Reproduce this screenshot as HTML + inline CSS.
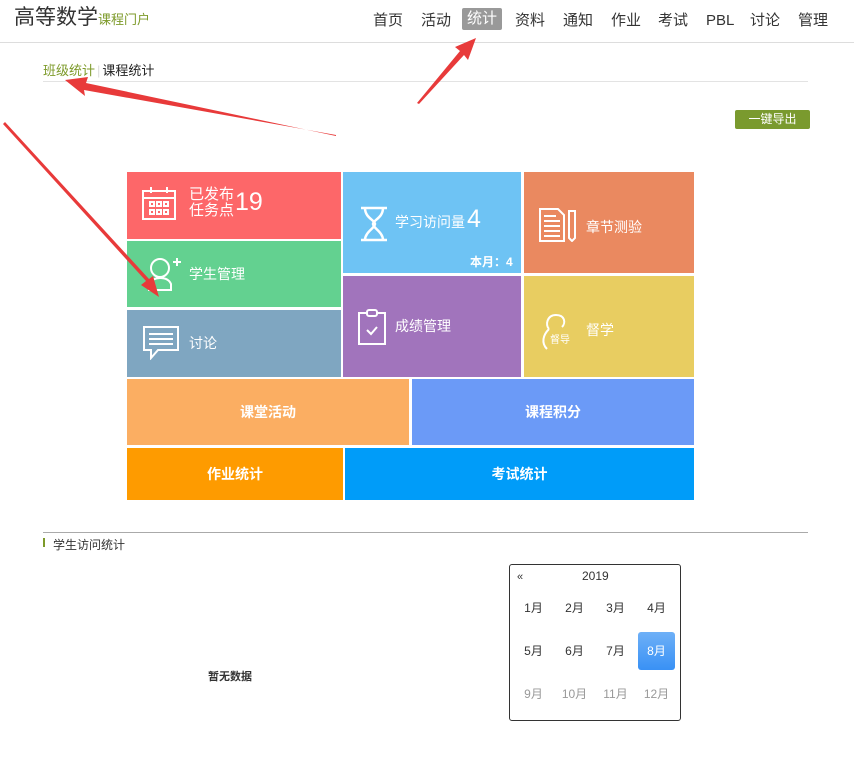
<!DOCTYPE html>
<html><head><meta charset="utf-8"><style>
*{margin:0;padding:0;box-sizing:border-box}
body{width:854px;height:773px;background:#fff;font-family:"Liberation Sans","Noto Sans CJK SC",sans-serif;position:relative;overflow:hidden;color:#333}
.a{position:absolute}
.nav span{position:absolute;top:10px;font-size:15px;color:#333;height:21px;line-height:21px;text-align:center}
.t{position:absolute;color:#fff;font-size:14px;display:flex;align-items:center}
.c{justify-content:center;font-weight:bold}
.m{position:absolute;width:37px;height:38px;line-height:38px;text-align:center;font-size:12px;color:#333;border-radius:3px}
</style></head><body>
<div class="a" style="left:14px;top:1px;font-size:21px;color:#333">高等数学<span style="font-size:13px;color:#7d9a2a">课程门户</span></div>
<div class="nav">
<span style="left:373px">首页</span><span style="left:421px">活动</span>
<span style="left:462px;width:40px;top:8px;height:22px;line-height:22px;background:#999;color:#fff;border-radius:2px">统计</span>
<span style="left:515px">资料</span><span style="left:563px">通知</span><span style="left:611px">作业</span><span style="left:658px">考试</span><span style="left:706px">PBL</span><span style="left:750px">讨论</span><span style="left:798px">管理</span>
</div>
<div class="a" style="left:0;top:42px;width:854px;height:1px;background:#ddd"></div>
<div class="a" style="left:43px;top:60px;font-size:13px;color:#7d9a2a">班级统计<span style="color:#ddd;margin:0 2px">|</span><span style="color:#222">课程统计</span></div>
<div class="a" style="left:43px;top:81px;width:765px;height:1px;background:#e3e3e3"></div>
<div class="a" style="left:735px;top:110px;width:75px;height:19px;background:#7a9a2e;color:#fff;font-size:12px;text-align:center;line-height:19px;border-radius:2px">一键导出</div>

<div class="t" style="left:127px;top:172px;width:214px;height:67px;background:#fd6769">
<svg class="a" style="left:14px;top:14px" width="36" height="36" viewBox="0 0 36 36" fill="none" stroke="#fff" stroke-width="2"><rect x="2" y="5" width="32" height="28"/><line x1="2" y1="12" x2="34" y2="12"/><line x1="10" y1="1" x2="10" y2="7"/><line x1="26" y1="1" x2="26" y2="7"/><rect x="9" y="16" width="4" height="4"/><rect x="16" y="16" width="4" height="4"/><rect x="23" y="16" width="4" height="4"/><rect x="9" y="24" width="4" height="4"/><rect x="16" y="24" width="4" height="4"/><rect x="23" y="24" width="4" height="4"/></svg>
<div class="a" style="left:62px;top:15px;font-size:15px;line-height:16px">已发布<br>任务点</div><div class="a" style="left:108px;top:16px;font-size:25px">19</div></div>
<div class="t" style="left:127px;top:241px;width:214px;height:66px;background:#63d190">
<svg class="a" style="left:20px;top:15px" width="34" height="36" viewBox="0 0 34 36" fill="none" stroke="#fff" stroke-width="2"><circle cx="13" cy="12" r="9"/><path d="M2 34v-6c3-5 7-6 11-6s9 1 11 6v6z"/><path d="M26 6h8M30 2v8"/></svg>
<div class="a" style="left:62px;top:23px;font-size:14px">学生管理</div></div>
<div class="t" style="left:127px;top:310px;width:214px;height:67px;background:#7fa6c1">
<svg class="a" style="left:16px;top:16px" width="36" height="34" viewBox="0 0 36 34" fill="none" stroke="#fff" stroke-width="2"><path d="M1 1h34v23H15l-7 8v-8H1z"/><path d="M6 8h24M6 13h24M6 18h24"/></svg>
<div class="a" style="left:62px;top:23px;font-size:14px">讨论</div></div>
<div class="t" style="left:343px;top:172px;width:178px;height:101px;background:#6ec3f4">
<svg class="a" style="left:17px;top:34px" width="28" height="36" viewBox="0 0 28 36" fill="none" stroke="#fff" stroke-width="2.5"><path d="M1 2h26M1 34h26M5 2c0 10 10 12 10 16S5 26 5 34M23 2c0 10-10 12-10 16s10 8 10 16"/></svg>
<div class="a" style="left:52px;top:40px;font-size:14px">学习访问量</div><div class="a" style="left:124px;top:33px;font-size:25px">4</div>
<div class="a" style="left:127px;top:81px;font-size:12px;font-weight:bold">本月：4</div></div>
<div class="t" style="left:343px;top:276px;width:178px;height:101px;background:#a174bc">
<svg class="a" style="left:15px;top:33px" width="28" height="36" viewBox="0 0 28 36" fill="none" stroke="#fff" stroke-width="2"><path d="M9 4H1v31h26V4h-8"/><rect x="9" y="1" width="10" height="6" rx="2"/><path d="M9 21l4 4 6-7"/></svg>
<div class="a" style="left:52px;top:40px;font-size:14px">成绩管理</div></div>
<div class="t" style="left:524px;top:172px;width:170px;height:101px;background:#ea8960">
<svg class="a" style="left:15px;top:36px" width="38" height="34" viewBox="0 0 38 34" fill="none" stroke="#fff" stroke-width="2"><path d="M1 1h18l6 6v26H1z"/><path d="M5 8h12M5 13h16M5 18h16M5 23h16M5 28h16"/><path d="M30 3h6v27l-3 3-3-3z"/></svg>
<div class="a" style="left:62px;top:45px;font-size:14px">章节测验</div></div>
<div class="t" style="left:524px;top:276px;width:170px;height:101px;background:#e8cd61">
<svg class="a" style="left:17px;top:38px" width="40" height="36" viewBox="0 0 40 36" fill="none" stroke="#fff" stroke-width="2"><path d="M8 15c-4-4-2-14 7-14s10 8 6 12M8 15c-6 6-8 14-2 20"/><text x="9" y="29" font-size="10" fill="#fff" stroke="none" font-family="Noto Sans CJK SC">督导</text></svg>
<div class="a" style="left:62px;top:44px;font-size:14px">督学</div></div>
<div class="t c" style="left:127px;top:379px;width:282px;height:66px;background:#fbae62">课堂活动</div>
<div class="t c" style="left:412px;top:379px;width:282px;height:66px;background:#6b9af7">课程积分</div>
<div class="t c" style="left:127px;top:448px;width:216px;height:52px;background:#fe9b00">作业统计</div>
<div class="t c" style="left:345px;top:448px;width:349px;height:52px;background:#009cf9">考试统计</div>

<div class="a" style="left:43px;top:532px;width:765px;height:1px;background:#aaa"></div>
<div class="a" style="left:43px;top:538px;width:2px;height:9px;background:#7d9a2a"></div>
<div class="a" style="left:53px;top:536px;font-size:12px;color:#333">学生访问统计</div>
<div class="a" style="left:208px;top:668px;font-size:11px;font-weight:bold;color:#333">暂无数据</div>

<div class="a" style="left:509px;top:564px;width:172px;height:157px;border:1px solid #333;border-radius:3px">
<div class="a" style="left:7px;top:6px;font-size:11px">«</div>
<div class="a" style="left:72px;top:4px;font-size:12px">2019</div>
<div class="m" style="left:5px;top:24px">1月</div><div class="m" style="left:46px;top:24px">2月</div><div class="m" style="left:87px;top:24px">3月</div><div class="m" style="left:128px;top:24px">4月</div>
<div class="m" style="left:5px;top:67px">5月</div><div class="m" style="left:46px;top:67px">6月</div><div class="m" style="left:87px;top:67px">7月</div><div class="m" style="left:128px;top:67px;background:linear-gradient(#6eb0f7,#3991f5);color:#fff">8月</div>
<div class="m" style="left:5px;top:110px;color:#999">9月</div><div class="m" style="left:46px;top:110px;color:#999">10月</div><div class="m" style="left:87px;top:110px;color:#999">11月</div><div class="m" style="left:128px;top:110px;color:#999">12月</div>
</div>

<svg class="a" style="left:0;top:0" width="854" height="773" viewBox="0 0 854 773">
<g fill="#e83a3a">
<polygon points="336,135 84,90 85,96 65,80 88,77 86,83 336,136"/>
<polygon points="417,103 460,51 455,47 476,38 468,60 464,55 419,104"/>
<polygon points="3,124 146,281 141,285 159,297 153,276 149,279 5,122"/>
</g>
</svg>
</body></html>
